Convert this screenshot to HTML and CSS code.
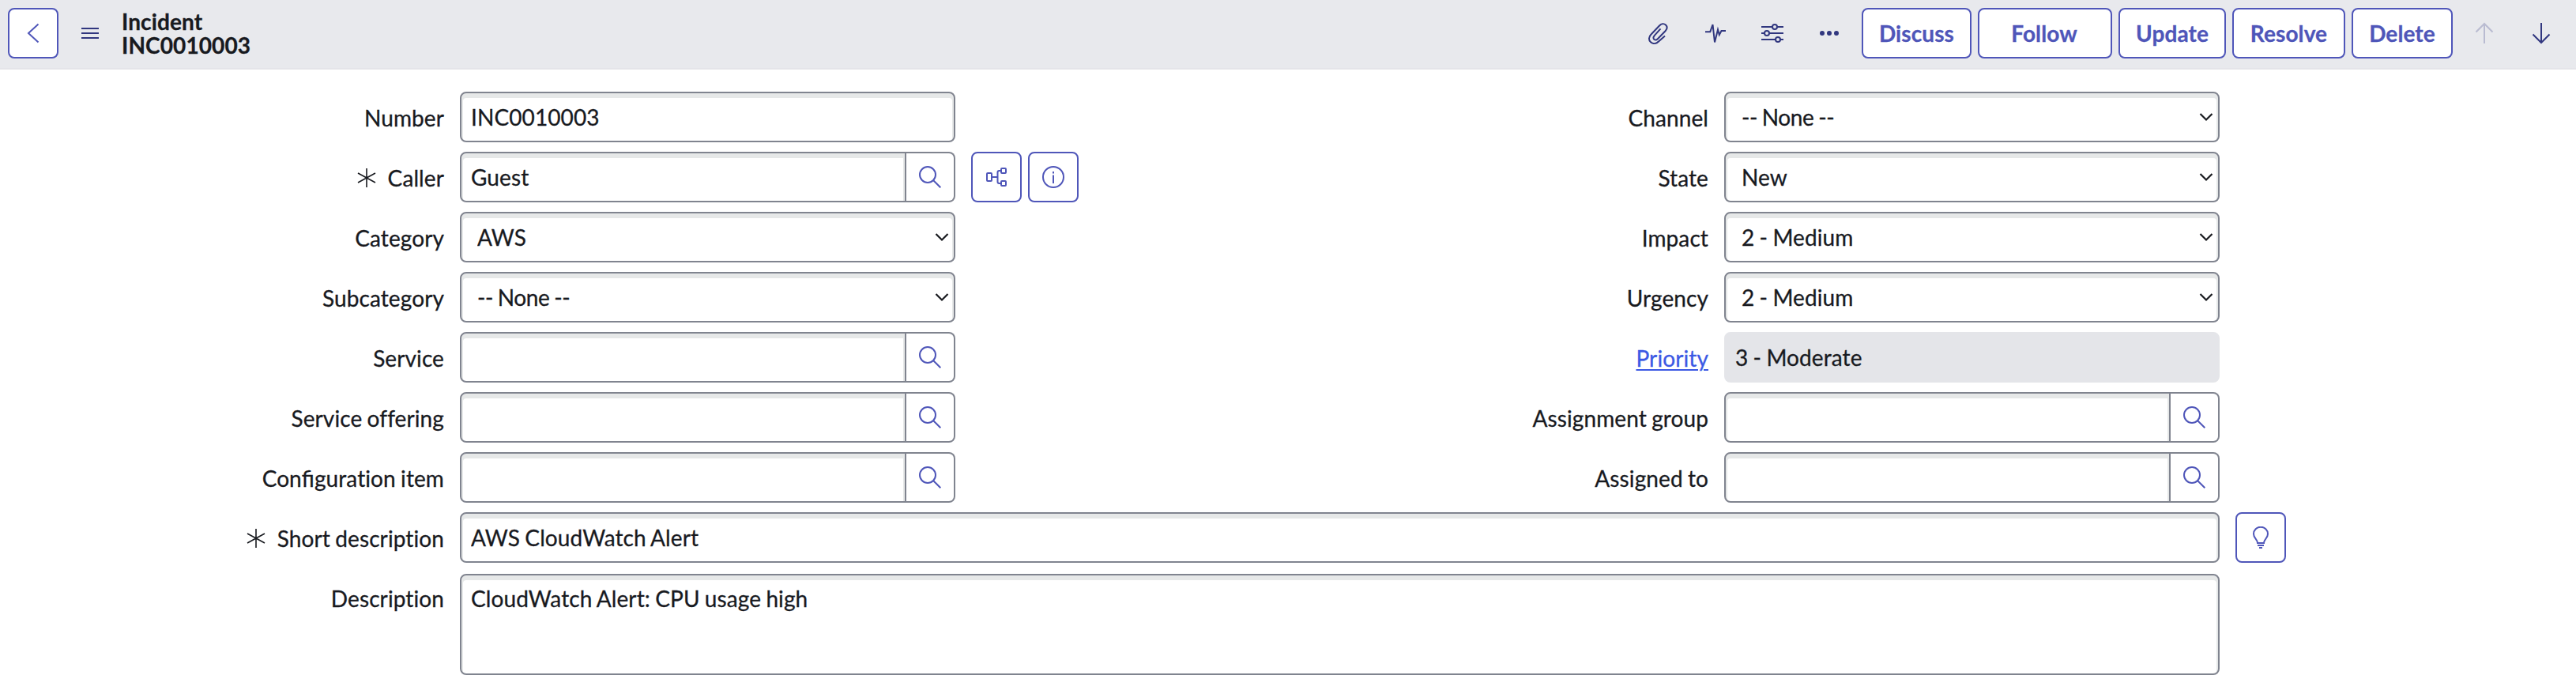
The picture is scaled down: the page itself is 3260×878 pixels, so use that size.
FILE: index.html
```html
<!DOCTYPE html>
<html lang="en">
<head>
<meta charset="utf-8">
<title>Incident INC0010003</title>
<link rel="stylesheet" href="styles.css">
</head>
<body>
<svg class="defs" aria-hidden="true">
  <symbol id="search" viewBox="0 0 28 28"><circle cx="11" cy="11" r="10"/><path d="M18 18l9.3 9.3"/></symbol>
  <symbol id="chevron" viewBox="0 0 18 12"><path d="M1.500 2L9 9.500L16.500 2"/></symbol>
  <symbol id="required" viewBox="0 0 24 24"><path d="M12 0v24M1 6l22 12M1 18L23 6"/></symbol>
</svg>
<header class="bar">
  <button class="btn square" aria-label="Back"><svg class="icon i28" viewBox="0 0 28 28"><path d="M20.500 2.500L8 14l12.500 11.500"/></svg></button>
  <svg class="icon menu" viewBox="0 0 22 16"><path d="M0 2h22M0 8h22M0 14h22"/></svg>
  <h1 class="title">Incident<br>INC0010003</h1>
  <div class="tools">
    <svg class="icon i28" viewBox="0 0 28 28"><path d="M22 17.500L14 24.500C11 27.500 7 28 4 25.300C1 22.500 1.500 18.500 4.500 15.500L15 4.500C17.500 1.800 20.800 1.500 23 3.500C25.200 5.700 24.800 8.800 22.500 11.300L12.800 21.200C11.300 22.700 9.600 22.800 8.300 21.700C7 20.500 7.200 18.700 8.600 17.200L16.500 8.300"/></svg>
    <svg class="icon i28" viewBox="0 0 28 28"><path d="M1 12.200h6.300L10.500 3l2.500 22.500L17 9.500l1.800 6.500 2.700-5h5.500"/></svg>
    <svg class="icon i28" viewBox="0 0 28 28"><path d="M0 6h14M20 6h8M0 14h4M10 14h18M0 22h18M24 22h4"/><circle cx="17" cy="6" r="3"/><circle cx="7" cy="14" r="3"/><circle cx="21" cy="22" r="3"/></svg>
    <svg class="icon i28 dots" viewBox="0 0 28 28"><circle cx="5" cy="14" r="3"/><circle cx="14" cy="14" r="3"/><circle cx="23" cy="14" r="3"/></svg>
  </div>
  <div class="actions">
    <button class="btn discuss">Discuss</button>
    <button class="btn follow">Follow</button>
    <button class="btn update">Update</button>
    <button class="btn resolve">Resolve</button>
    <button class="btn delete">Delete</button>
  </div>
  <div class="pager">
    <svg class="icon i28 off" viewBox="0 0 28 28"><path d="M14 27V2M3.500 12.500L14 2l10.500 10.500"/></svg>
    <svg class="icon i28" viewBox="0 0 28 28"><path d="M14 1v25M3.500 15.500L14 26l10.500-10.500"/></svg>
  </div>
</header>
<main class="form">
  <div class="columns">
    <section class="column">
      <div class="row"><label class="label">Number</label><input class="field" value="INC0010003"></div>
      <div class="row"><label class="label"><svg class="star"><use href="#required"/></svg>Caller</label>
        <div class="lookup"><input class="field" value="Guest"><button class="find" aria-label="Look up"><svg class="icon i28"><use href="#search"/></svg></button></div>
        <div class="extras">
          <button class="btn square" aria-label="Hierarchy"><svg class="icon i28" viewBox="0 0 28 28"><rect x="2" y="9" width="6" height="10" rx="1"/><rect x="20" y="3" width="6" height="6" rx="1"/><rect x="20" y="19" width="6" height="6" rx="1"/><path d="M8 14h7.500M20 6h-2.500q-2 0-2 2v12q0 2 2 2H20"/></svg></button>
          <button class="btn square" aria-label="Info"><svg class="icon i28" viewBox="0 0 28 28"><circle cx="14" cy="14" r="13"/><path d="M14 11.500V22M14 7v2.400"/></svg></button>
        </div></div>
      <div class="row"><label class="label">Category</label><div class="pick"><select class="field"><option>AWS</option></select><svg class="chevron"><use href="#chevron"/></svg></div></div>
      <div class="row"><label class="label">Subcategory</label><div class="pick"><select class="field empty"><option>-- None --</option></select><svg class="chevron"><use href="#chevron"/></svg></div></div>
      <div class="row"><label class="label">Service</label><div class="lookup"><input class="field"><button class="find" aria-label="Look up"><svg class="icon i28"><use href="#search"/></svg></button></div></div>
      <div class="row"><label class="label">Service offering</label><div class="lookup"><input class="field"><button class="find" aria-label="Look up"><svg class="icon i28"><use href="#search"/></svg></button></div></div>
      <div class="row"><label class="label"><span>Con<span class="lig">fi</span>guration item</span></label><div class="lookup"><input class="field"><button class="find" aria-label="Look up"><svg class="icon i28"><use href="#search"/></svg></button></div></div>
    </section>
    <section class="column">
      <div class="row"><label class="label">Channel</label><div class="pick"><select class="field empty"><option>-- None --</option></select><svg class="chevron"><use href="#chevron"/></svg></div></div>
      <div class="row"><label class="label">State</label><div class="pick"><select class="field"><option>New</option></select><svg class="chevron"><use href="#chevron"/></svg></div></div>
      <div class="row"><label class="label">Impact</label><div class="pick"><select class="field"><option>2 - Medium</option></select><svg class="chevron"><use href="#chevron"/></svg></div></div>
      <div class="row"><label class="label">Urgency</label><div class="pick"><select class="field"><option>2 - Medium</option></select><svg class="chevron"><use href="#chevron"/></svg></div></div>
      <div class="row"><label class="label"><a class="link" href="#">Priority</a></label><input class="field readonly" value="3 - Moderate" readonly></div>
      <div class="row"><label class="label">Assignment group</label><div class="lookup"><input class="field"><button class="find" aria-label="Look up"><svg class="icon i28"><use href="#search"/></svg></button></div></div>
      <div class="row"><label class="label">Assigned to</label><div class="lookup"><input class="field"><button class="find" aria-label="Look up"><svg class="icon i28"><use href="#search"/></svg></button></div></div>
    </section>
  </div>
  <div class="row wide"><label class="label"><svg class="star"><use href="#required"/></svg>Short description</label><input class="field" value="AWS CloudWatch Alert">
    <div class="extras"><button class="btn square" aria-label="Suggestions"><svg class="icon i28" viewBox="0 0 28 28"><path d="M10 21c0-5-5-6-5-11.500a9 8.800 0 0 1 18 0C23 15 18 16 18 21zM10 24h8M12 27h4"/></svg></button></div></div>
  <div class="row wide tall"><label class="label">Description</label><textarea class="field area">CloudWatch Alert: CPU usage high</textarea></div>
</main>
</body>
</html>
```
FILE: styles.css
```css
* { box-sizing: border-box; }
body { margin: 0; background: #fff; color: #181a1f; font: 28px/34px Lato, sans-serif; letter-spacing: .1px; word-spacing: -1px; font-variant-ligatures: no-common-ligatures; -webkit-text-stroke: .3px currentColor; }
button, input, select, textarea { font: inherit; color: inherit; letter-spacing: inherit; word-spacing: inherit; margin: 0; }
.defs { display: none; }
.icon { display: block; flex: none; fill: none; stroke: currentColor; stroke-width: 2; }
.i28 { width: 28px; height: 28px; }

.bar { display: flex; align-items: center; height: 88px; padding: 0 30px 4px 10px; background: #e8e9ed; box-shadow: inset 0 -2px #e4e4e9; color: #31377f; }
.btn { display: flex; align-items: center; justify-content: center; height: 64px; padding: 0; border: 2px solid #4f56b9; border-radius: 8px; background: #fff; color: #4f56b9; font-weight: 700; }
.square { width: 64px; flex: none; }
.menu { width: 22px; height: 16px; margin-left: 29px; }
.title { margin: 0 0 0 29px; color: #181a1f; font-size: 28px; line-height: 30px; font-weight: 700; }
.tools { display: flex; gap: 44px; margin-left: auto; margin-right: 27px; }
.dots { fill: currentColor; stroke: none; }
.actions { display: flex; gap: 8px; }
.discuss { width: 139px; }
.follow { width: 170px; padding-right: 2px; }
.update { width: 136px; }
.resolve { width: 143px; }
.delete { width: 128px; }
.pager { display: flex; gap: 44px; margin-left: 26px; }
.off { opacity: .25; }

.form { min-height: 790px; padding-top: 28px; }
.columns { display: grid; grid-template-columns: 1600px 1600px; }
.column { display: grid; }
.row { display: grid; grid-template-columns: 562px 627px auto; column-gap: 20px; justify-content: start; height: 76px; }
.wide { grid-template-columns: 562px 2227px auto; }
.tall { height: 132px; padding-top: 2px; }
.label { display: flex; align-items: center; justify-content: flex-end; height: 64px; padding-top: 2px; }
.tall .label { height: 60px; }
.lig { letter-spacing: 0; font-variant-ligatures: common-ligatures; }
.star { width: 24px; height: 24px; margin-right: 15px; fill: none; stroke: currentColor; stroke-width: 1.6; }
.link { color: #3c59e4; text-decoration-thickness: 2px; text-underline-offset: 3px; }
.field { display: block; width: 100%; height: 64px; padding: 0 12px; border: 2px solid #80848f; border-radius: 8px; outline: 0; background: #fff; box-shadow: inset 0 4px 0 2px #e6e8e8; }
.readonly { border-color: #e4e5e9; background: #e4e5e9; box-shadow: none; }
.area { height: 128px; padding: 12px; resize: none; overflow: hidden; }
.pick { display: grid; align-items: center; height: 64px; }
.pick > * { grid-area: 1 / 1; }
.pick .field { appearance: none; padding-left: 20px; }
.pick .empty { letter-spacing: -.4px; word-spacing: -1px; }
.chevron { justify-self: end; width: 18px; height: 12px; margin-right: 8px; fill: none; stroke: #181a1f; stroke-width: 2.2; pointer-events: none; }
.lookup { display: flex; height: 64px; }
.lookup .field { width: 565px; border-right: 2px solid #80848f; border-radius: 8px 0 0 8px; }
.find { display: flex; align-items: center; justify-content: center; width: 62px; padding: 0; border: 2px solid #80848f; border-left: 0; border-radius: 0 8px 8px 0; background: #fff; color: #4f56b9; }
.extras { display: flex; gap: 8px; height: 64px; }
```
